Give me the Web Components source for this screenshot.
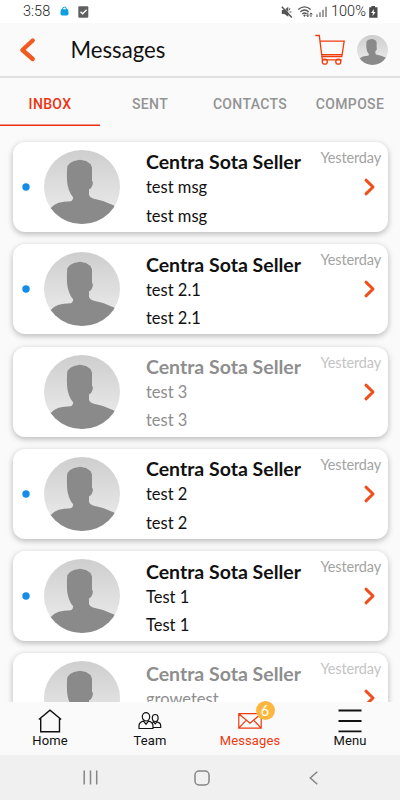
<!DOCTYPE html>
<html lang="en">
<head>
<meta charset="utf-8">
<title>Messages</title>
<style>
html,body{margin:0;height:100%;overflow:hidden;background:#fafafa}
</style>
</head>
<body>
<messages-app></messages-app>
<script>
class Base extends HTMLElement {
  constructor() {
    super();
    this.attachShadow({mode: 'open'});
  }
  connectedCallback() {
    this.shadowRoot.innerHTML = '<style>*{box-sizing:border-box}svg{display:block;overflow:visible}' + this.css() + '</style>' + this.html();
  }
}

class StatusBar extends Base {
  css() {
    return `:host{display:flex;height:23px;background:#fff;align-items:center;padding:0 22px 0 23px;font:300 14.500px/24px Roboto,sans-serif;color:#222}
    .gap{flex:1} .time{width:29px;white-space:nowrap} .bag{margin-left:8px} .chk{margin-left:9px}
    .pct{margin-left:3px;width:37px;white-space:nowrap}`;
  }
  html() {
    return `<span class="time">3:58</span>
    <svg class="bag" width="9" height="9" viewBox="0 0 9 9"><path d="M2.6 3V2a1.9 1.9 0 0 1 3.8 0v1" fill="none" stroke="#0e9fdf" stroke-width="1"/><path d="M.9 2.200h7.200l.5 3.900q0 2.400-1.500 2.400H1.900Q.4 8.500.4 6.100z" fill="#0e9fdf"/></svg>
    <svg class="chk" width="11" height="12" viewBox="0 0 11 12"><rect x=".3" y=".3" width="10" height="11.4" rx="1" fill="#606060"/><path d="M2.5 5.7l2.1 2.1 4-4" fill="none" stroke="#fff" stroke-width="1.3"/></svg>
    <span class="gap"></span>
    <svg width="12" height="12" viewBox="0 0 12 12"><path d="M.8 4h2.5l4-3.2v10L3.3 8H.8z" fill="#555"/><path d="M9 2.2l-.8 2M10.5 6H8.5" stroke="#555" stroke-width="1"/><path d="M1.800.4l9.500 10" stroke="#fff" stroke-width=".6"/><path d="M.8.8l10 10.6" stroke="#555" stroke-width="1.500"/></svg>
    <svg style="margin-left:5px" width="16" height="12" viewBox="0 0 16 12"><g fill="none" stroke="#555" stroke-width="1.300"><path d="M.3 3.400q6.200-5.200 12.400 0M2.300 5.800q4.200-3.600 8.400 0M4.300 7.900q2.200-1.900 4.400 0"/><path d="M9.800 6.500v4M8.500 9.300l1.300 1.400 1.300-1.400M13 11V7M11.700 8.300L13 6.900l1.300 1.400" stroke-width="1"/></g><circle cx="6.500" cy="9.600" r="1.100" fill="#555"/></svg>
    <svg style="margin-left:2px" width="12" height="12" viewBox="0 0 12 12"><path d="M1 8.500v2.500M4 6.200v4.800M7 3.800v7.200M10 .8v10.200" stroke="#777" stroke-width="1.400"/></svg>
    <span class="pct">100%</span>
    <svg style="margin-left:1px" width="9" height="12" viewBox="0 0 9 12"><path d="M2.500 0h3.500v1.200h2.500v10.600H.2V1.200h2.300z" fill="#4c4c4c"/><path d="M5.200 2.800L2.100 7H4l-.6 3.200L6.600 6h-2z" fill="#fff"/></svg>`;
  }
}

class UserAvatar extends Base {
  css() { return `:host{display:block;flex:none}svg{width:100%;height:100%}`; }
  html() {
    return `<svg viewBox="0 0 76 74" preserveAspectRatio="none"><defs><linearGradient id="g" x1="0" y1="0" x2="0" y2="1"><stop offset="0" stop-color="#cecece"/><stop offset=".75" stop-color="#e6e6e6"/></linearGradient><clipPath id="c"><ellipse cx="38" cy="37" rx="38" ry="37"/></clipPath></defs>
    <g clip-path="url(#c)"><rect width="76" height="74" fill="url(#g)"/>
    <path d="M0 74V60L7.500 57.500C11 53 17 51.800 27 51.300Q29 50 29.300 47.500C25.500 43.500 23.400 36 23.100 31C22.800 26 22.800 20 23.400 16Q25.500 12.500 30 11L36 9.800L42 11L46.500 14L48 17.500V30.500Q49.500 32 48.500 35Q47.500 38.500 45 39.500V45Q46 48 49 48.500L59 51L70 55.500L76 60V74Z" fill="#8a8a8a"/></g></svg>`;
  }
}

class AppHeader extends Base {
  css() {
    return `:host{display:flex;box-sizing:border-box;height:55px;background:#fafafa;border-bottom:2px solid #e0e0e0;align-items:center;padding:0 12.500px 0 19px;font:22.200px/30px Lato,sans-serif;color:#111}
    h1{font:inherit;margin:0 0 0 34.500px;flex:1} user-avatar{width:31px;height:30px;margin-left:12px}`;
  }
  html() {
    return `<svg width="17" height="24" viewBox="0 0 17 24"><path d="M13.700 2.500L3.400 12l10.300 9" fill="none" stroke="#f15a22" stroke-width="4.400" stroke-linecap="round" stroke-linejoin="round"/></svg>
    <h1>Messages</h1>
    <svg width="30" height="31" viewBox="0 0 30 31"><g fill="none" stroke="#f03c0c" stroke-width="1.300"><path d="M.3 1.500h4l3 24.300h19.500M4.800 7.200h24.400l-2.400 15.300H7M6.800 20.700h20.300"/><circle cx="9.800" cy="27.700" r="2.500"/><circle cx="23.300" cy="27.700" r="2.500"/></g></svg>
    <user-avatar></user-avatar>`;
  }
}

class TabBar extends Base {
  css() {
    return `:host{display:grid;grid-template-columns:repeat(4,1fr);height:48px;background:#fafafa;font:500 14px/52px Roboto,sans-serif;letter-spacing:.35px;color:#939393;text-align:center}
    span{height:48px;white-space:nowrap}.on{color:#ee3311;box-shadow:inset 0 -1.500px #ec2d12}`;
  }
  html() { return `<span class="on">INBOX</span><span>SENT</span><span>CONTACTS</span><span>COMPOSE</span>`; }
}

class MessageCard extends Base {
  css() {
    return `:host{display:grid;grid-template-columns:31.500px 76px 1fr auto;height:90px;margin-bottom:12.300px;flex:none;background:#fff;border-radius:12px;box-shadow:0 2px 6px rgba(0,0,0,.27);font:16.500px/20px Lato,sans-serif;color:#111}
    :host([read]){color:#8e8e8e}
    .dot{width:8px;height:8px;align-self:center;margin-left:9.500px}
    :host([read]) .dot{visibility:hidden}
    user-avatar{height:74px;margin-top:8px}
    .body{padding:8.400px 0 0 26px;white-space:nowrap}
    b{display:block;font:700 19.500px/24px Lato,sans-serif} p{margin:3px 0 0;line-height:20px} p+p{margin-top:8.300px}
    .side{display:flex;flex-direction:column;align-items:flex-end;padding:7px 6.500px 0 0;font-size:14.500px;letter-spacing:-.15px;line-height:18px;color:#a3a3a3}
    :host([read]) .side{color:#c4c4c4}
    .side svg{margin:11px 5.500px 0 0}`;
  }
  html() {
    const t = this.getAttribute('text');
    const second = this.hasAttribute('single') ? '' : `<p>${t}</p>`;
    return `<svg class="dot" viewBox="0 0 8 8"><circle cx="4" cy="4" r="3.700" fill="#158de8"/></svg><user-avatar></user-avatar><div class="body"><b>Centra Sota Seller</b><p>${t}</p>${second}</div>
    <div class="side"><span>Yesterday</span><svg width="13" height="18" viewBox="0 0 13 18"><path d="M3 2.200L10 9l-7 6.800" fill="none" stroke="#f04e1a" stroke-width="3" stroke-linecap="round" stroke-linejoin="round"/></svg></div>`;
  }
}

class NavItem extends Base {
  css() {
    return `:host{display:flex;flex-direction:column;align-items:center;position:relative;padding-top:6px;font:13px/16px Roboto,sans-serif;color:#111}
    :host([active]){color:#ee3911} ::slotted(svg){display:block;height:25px;overflow:visible}
    .badge{position:absolute;left:55.500px;top:-1px;width:19px;height:19px;border-radius:50%;background:#fdb73e;color:#fff;font:14.500px/20px Lato,sans-serif;text-align:center}
    .label{letter-spacing:.1px}`;
  }
  html() {
    const n = this.getAttribute('badge');
    return `<slot></slot><span class="label">${this.getAttribute('label')}</span>${n ? `<span class="badge">${n}</span>` : ''}`;
  }
}

class BottomNav extends Base {
  css() {
    return `:host{display:grid;grid-template-columns:repeat(4,1fr);height:53.500px;background:#fafafa;flex:none;position:relative}`;
  }
  html() {
    return `<nav-item label="Home"><svg width="24" height="25" viewBox="0 0 24 25" fill="none" stroke="#111" stroke-width="1.400"><path d="M.8 11.500L12 2.200l11.200 9.300M2.700 10v13.700h18.800V10"/></svg></nav-item>
    <nav-item label="Team"><svg width="24" height="25" viewBox="0 0 24 25" fill="none" stroke="#111" stroke-width="1.200"><ellipse cx="8" cy="8.800" rx="3.700" ry="4.200"/><ellipse cx="17.200" cy="10" rx="2.900" ry="3.500"/><path d="M1 20.500v-2.700q0-3.500 4.500-4.600L8 16.200l2.500-3q4.500 1.100 4.500 4.600v2.700zM14.500 14.500l1-.6 1.700 2 1.700-2q3.800 1 3.800 3.600v2H15"/></svg></nav-item>
    <nav-item label="Messages" active badge="6"><svg width="24" height="25" viewBox="0 0 24 25" fill="none" stroke="#ee3911" stroke-width="1.200"><path d="M.8 5.700h22.400v14.500H.8zM.8 5.700L12 15.300l11.200-9.600M.8 20.200l7.500-8M23.200 20.200l-7.500-8"/></svg></nav-item>
    <nav-item label="Menu"><svg width="24" height="25" viewBox="0 0 24 25" fill="none" stroke="#111" stroke-width="1.800"><path d="M.5 2.500h23M.5 13h23M.5 23.300h23"/></svg></nav-item>`;
  }
}

class SystemBar extends Base {
  css() {
    return `:host{display:grid;grid-template-columns:110px 1fr 110px;padding:0 35px;height:45px;background:#f0f0f0;flex:none;align-items:center;justify-items:center}
    svg{fill:none;stroke:#858585;stroke-width:1.500}`;
  }
  html() {
    return `<svg width="15" height="15" viewBox="0 0 15 15"><path d="M1.200.5v14M7.500.5v14M13.700.5v14"/></svg>
    <svg style="margin-left:3px" width="16" height="16" viewBox="0 0 16 16"><rect x="1" y="1" width="14" height="14" rx="4"/></svg>
    <svg style="margin-left:7px" width="9" height="14" viewBox="0 0 9 14"><path d="M8.300.7L1.300 7l7 6.300"/></svg>`;
  }
}

class MessagesApp extends Base {
  css() {
    return `:host{display:flex;flex-direction:column;width:400px;height:800px;overflow:hidden;background:#fafafa}
    status-bar,app-header,tab-bar{flex:none}
    main{flex:1;min-height:0;overflow:hidden;display:flex;flex-direction:column;padding:16px 12.500px 0}`;
  }
  html() {
    return `<status-bar></status-bar><app-header></app-header><tab-bar></tab-bar>
    <main><message-card text="test msg"></message-card><message-card text="test 2.1"></message-card><message-card read text="test 3"></message-card><message-card text="test 2"></message-card><message-card text="Test 1"></message-card><message-card read single text="growetest"></message-card></main>
    <bottom-nav></bottom-nav><system-bar></system-bar>`;
  }
}

customElements.define('status-bar', StatusBar);
customElements.define('user-avatar', UserAvatar);
customElements.define('app-header', AppHeader);
customElements.define('tab-bar', TabBar);
customElements.define('message-card', MessageCard);
customElements.define('nav-item', NavItem);
customElements.define('bottom-nav', BottomNav);
customElements.define('system-bar', SystemBar);
customElements.define('messages-app', MessagesApp);
</script>
</body>
</html>
